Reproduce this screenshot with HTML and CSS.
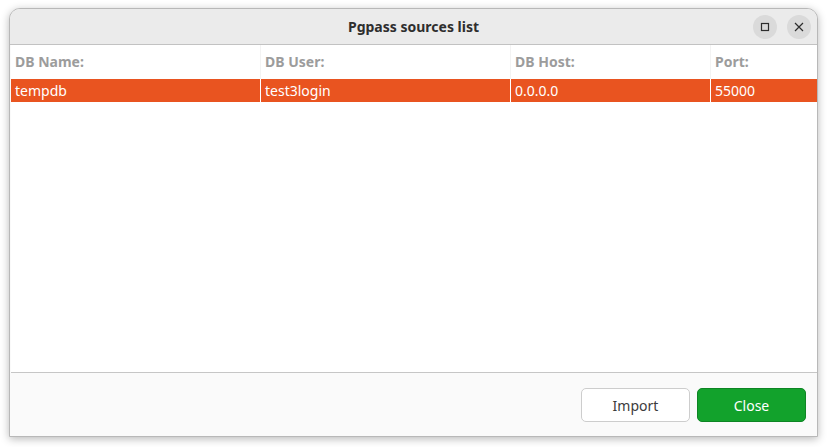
FILE: index.html
```html
<!DOCTYPE html>
<html>
<head>
<meta charset="utf-8">
<link rel="stylesheet" href="styles.css">
</head>
<body>
<div class="window">
  <div class="titlebar">
    <div class="title">Pgpass sources list</div>
    <div class="wm-buttons">
      <div class="wm-btn">
        <svg width="10" height="10" viewBox="0 0 10 10"><rect x="1.5" y="1.5" width="7" height="7" fill="none" stroke="#2e2e2e" stroke-width="1.2"/></svg>
      </div>
      <div class="wm-btn">
        <svg width="10" height="10" viewBox="0 0 10 10"><path d="M1 1 L9 9 M9 1 L1 9" stroke="#2e2e2e" stroke-width="1.2" fill="none"/></svg>
      </div>
    </div>
  </div>
  <div class="list">
    <div class="row header">
      <div class="cell c1">DB Name:</div>
      <div class="cell c2">DB User:</div>
      <div class="cell c3">DB Host:</div>
      <div class="cell c4">Port:</div>
    </div>
    <div class="row selected">
      <div class="cell c1">tempdb</div>
      <div class="cell c2">test3login</div>
      <div class="cell c3">0.0.0.0</div>
      <div class="cell c4">55000</div>
    </div>
  </div>
  <div class="footer">
    <button class="btn import">Import</button>
    <button class="btn close">Close</button>
  </div>
</div>
</body>
</html>
```
FILE: styles.css
```css
html, body {
  margin: 0;
  padding: 0;
  background: #ffffff;
  width: 828px;
  height: 447px;
  overflow: hidden;
  font-family: "Noto Sans", "Open Sans", sans-serif;
}
.window {
  margin: 8px 0 0 9px;
  width: 809px;
  height: 429px;
  box-sizing: border-box;
  border: 1px solid #b8b8b8;
  border-radius: 11px 11px 0 0;
  box-shadow: 0 2px 9px rgba(0, 0, 0, 0.28);
  display: flex;
  flex-direction: column;
  overflow: hidden;
  background: #fafafa;
}
.titlebar {
  height: 35px;
  flex: none;
  background: #ebebeb;
  border-bottom: 1px solid #c2c2c2;
  display: flex;
  align-items: center;
  justify-content: center;
  position: relative;
}
.title {
  font-weight: bold;
  font-size: 14px;
  color: #2e2e2e;
}
.wm-buttons {
  position: absolute;
  right: 6px;
  top: 6px;
  display: flex;
  gap: 10px;
}
.wm-btn {
  width: 24px;
  height: 24px;
  border-radius: 50%;
  background: #dadada;
  display: flex;
  align-items: center;
  justify-content: center;
}
.list {
  flex: 1;
  background: #ffffff;
  border-bottom: 1px solid #c6c6c6;
  margin-left: 1px;
}
.row {
  display: flex;
}
.cell {
  box-sizing: border-box;
  padding-left: 4px;
  font-size: 14px;
  white-space: nowrap;
}
.c1 { width: 250px; }
.c2 { width: 250px; }
.c3 { width: 200px; }
.c4 { flex: 1; }
.header {
  height: 34px;
  align-items: center;
}
.header .cell {
  font-weight: bold;
  color: #9c9c9c;
  height: 34px;
  line-height: 34px;
  border-right: 1px solid #f3f3f3;
}
.header .c4 { border-right: none; }
.selected {
  height: 23px;
  background: #e95420;
  color: #ffffff;
}
.selected .cell {
  line-height: 23px;
  border-right: 1px solid #ffffff;
}
.selected .c4 { border-right: none; }
.footer {
  height: 63px;
  flex: none;
  background: #fafafa;
  display: flex;
  justify-content: flex-end;
  align-items: flex-start;
  padding: 15px 11px 0 0;
  box-sizing: border-box;
  gap: 7px;
}
.btn {
  width: 109px;
  height: 34px;
  border-radius: 5px;
  font-family: "Noto Sans", "Open Sans", sans-serif;
  font-size: 14px;
  box-sizing: border-box;
}
.import {
  background: #ffffff;
  border: 1px solid #cdcdcd;
  color: #3c3c3c;
}
.close {
  background: #12a22c;
  border: 1px solid #0e8524;
  color: #ffffff;
}
```
